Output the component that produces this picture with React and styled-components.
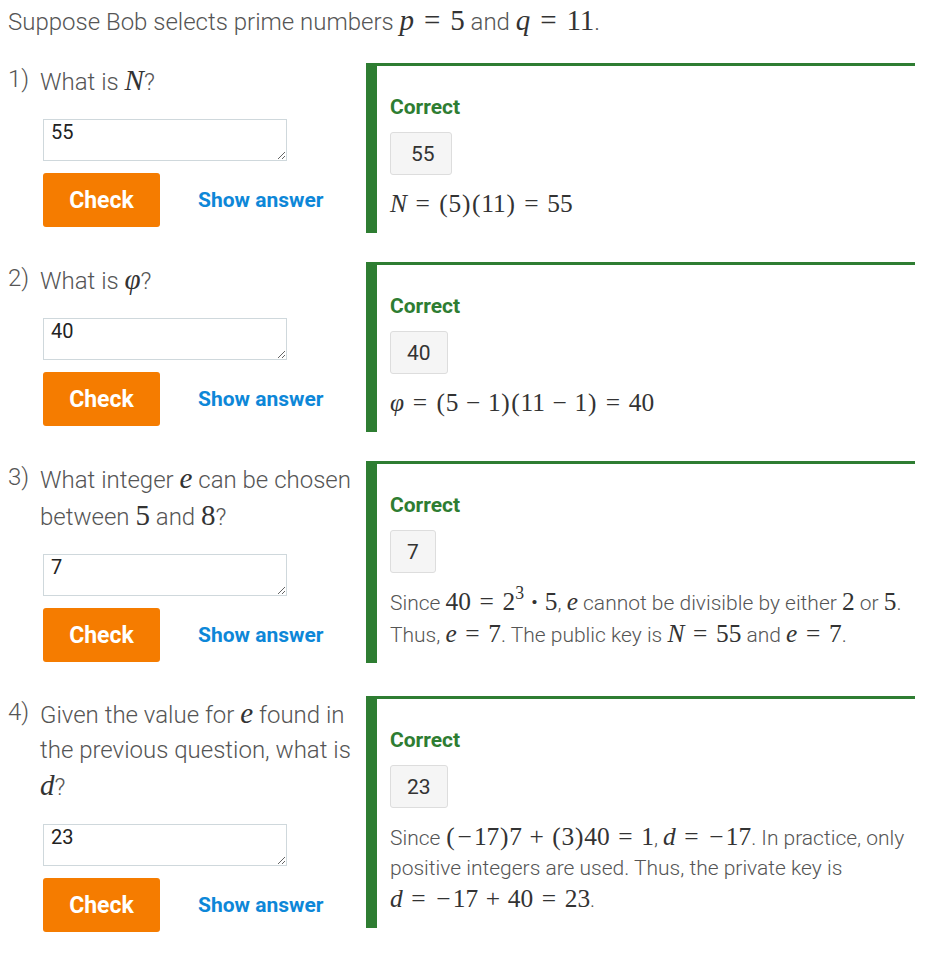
import styled, { createGlobalStyle } from "styled-components";

const GlobalStyle = createGlobalStyle`
    body {
        margin: 0;
        background: #ffffff;
        font-family: Roboto, "Noto Sans", sans-serif;
        color: #555555;
    }
`

function V({ children }) {
    return <Var>{children}</Var>
}

function Eq() {
    return <Rel>=</Rel>
}

function Op({ children }) {
    return <Bin>{children}</Bin>
}

export default function App() {
    return (
        <Page>
            <GlobalStyle />
            <Intro>
                Suppose Bob selects prime numbers <Math><V>p</V><Eq />5</Math> and <Math><V>q</V><Eq />11</Math>.
            </Intro>

            <Row>
                <Question>
                    <Prompt>
                        <Num>1)</Num>
                        <PromptText>What is <Math><V>N</V></Math>?</PromptText>
                    </Prompt>
                    <Answer defaultValue="55" />
                    <Actions>
                        <CheckButton>Check</CheckButton>
                        <ShowAnswer>Show answer</ShowAnswer>
                    </Actions>
                </Question>
                <Feedback>
                    <Correct>Correct</Correct>
                    <Given $left={20}>55</Given>
                    <Explain>
                        <Math><V>N</V><Eq /><P>(</P>5<P>)</P><P>(</P>11<P>)</P><Eq />55</Math>
                    </Explain>
                </Feedback>
            </Row>

            <Row>
                <Question>
                    <Prompt>
                        <Num>2)</Num>
                        <PromptText>What is <Math><V>φ</V></Math>?</PromptText>
                    </Prompt>
                    <Answer defaultValue="40" />
                    <Actions>
                        <CheckButton>Check</CheckButton>
                        <ShowAnswer>Show answer</ShowAnswer>
                    </Actions>
                </Question>
                <Feedback>
                    <Correct>Correct</Correct>
                    <Given>40</Given>
                    <Explain>
                        <Math><V>φ</V><Eq /><P>(</P>5<Op>−</Op>1<P>)</P><P>(</P>11<Op>−</Op>1<P>)</P><Eq />40</Math>
                    </Explain>
                </Feedback>
            </Row>

            <Row>
                <Question>
                    <Prompt>
                        <Num>3)</Num>
                        <PromptText>What integer <Math><V>e</V></Math> can be chosen between <Math>5</Math> and <Math>8</Math>?</PromptText>
                    </Prompt>
                    <Answer defaultValue="7" />
                    <Actions>
                        <CheckButton>Check</CheckButton>
                        <ShowAnswer>Show answer</ShowAnswer>
                    </Actions>
                </Question>
                <Feedback>
                    <Correct>Correct</Correct>
                    <Given>7</Given>
                    <Explain>
                        Since <Math>40<Eq />2<Sup>3</Sup><Dot>·</Dot>5</Math>, <Math><V>e</V></Math> cannot be divisible by either <Math>2</Math> or <Math>5</Math>.
                        Thus, <Math><V>e</V><Eq />7</Math>. The public key is <Math><V>N</V><Eq />55</Math> and <Math><V>e</V><Eq />7</Math>.
                    </Explain>
                </Feedback>
            </Row>

            <Row>
                <Question>
                    <Prompt>
                        <Num>4)</Num>
                        <PromptText>Given the value for <Math><V>e</V></Math> found in the previous question, what is <Math><V>d</V></Math>?</PromptText>
                    </Prompt>
                    <Answer defaultValue="23" />
                    <Actions>
                        <CheckButton>Check</CheckButton>
                        <ShowAnswer>Show answer</ShowAnswer>
                    </Actions>
                </Question>
                <Feedback>
                    <Correct>Correct</Correct>
                    <Given>23</Given>
                    <Explain>
                        Since <Math><P>(</P><Neg>−</Neg>17<P>)</P>7<Op>+</Op><P>(</P>3<P>)</P>40<Eq />1</Math>, <Math><V>d</V><Eq /><Neg>−</Neg>17</Math>. In practice, only positive integers are used. Thus, the private key is <Math><V>d</V><Eq /><Neg>−</Neg>17<Op>+</Op>40<Eq />23</Math>.
                    </Explain>
                </Feedback>
            </Row>
        </Page>
    )
}

const Page = styled.main`
    display: flex;
    flex-direction: column;
    padding: 3px 0 0 8px;
    width: 907px;
`

const Intro = styled.p`
    margin: 0 0 24px 0;
    font-size: 24px;
    font-weight: 300;
    line-height: 34px;
    color: #555555;
`

// KaTeX-like inline math, Times standing in for Computer Modern
const Math = styled.span`
    font-family: "Liberation Serif", "DejaVu Serif", serif;
    font-size: 1.21em;
    color: #333333;
    white-space: nowrap;
`

const Var = styled.i`
    font-style: italic;
`

const Rel = styled.span`
    margin: 0 0.34em;
`

const Bin = styled.span`
    margin: 0 0.3em;
`

const Dot = styled.span`
    margin: 0 0.24em;
    font-weight: 700;
`

const Neg = styled.span`
    margin: 0 0.08em;
`

const P = styled.span`
    margin: 0 0.03em;
`

const Sup = styled.sup`
    font-size: 0.7em;
    line-height: 0;
    vertical-align: 0.6em;
`

const Row = styled.section`
    display: flex;
    align-items: flex-start;
    gap: 8px;
    margin-bottom: 29px;
`

const Question = styled.div`
    display: flex;
    flex-direction: column;
    flex: 0 0 350px;
    padding-bottom: 5px;
`

const Prompt = styled.div`
    display: flex;
    align-items: flex-start;
`

const Num = styled.span`
    flex: 0 0 32px;
    font-size: 24px;
    font-weight: 300;
    line-height: 32px;
    color: #555555;
`

const PromptText = styled.span`
    font-size: 24px;
    font-weight: 300;
    line-height: 35px;
    color: #555555;
`

const Answer = styled.textarea`
    margin: 19px 0 0 35px;
    width: 244px;
    height: 42px;
    box-sizing: border-box;
    border: 1px solid #cfd8dc;
    border-radius: 0;
    padding: 0 7px;
    font-family: Roboto, sans-serif;
    font-size: 20px;
    line-height: 24px;
    color: #222222;
    outline: none;
`

const Actions = styled.div`
    display: flex;
    align-items: center;
    gap: 38px;
    margin: 12px 0 0 35px;
`

const CheckButton = styled.button`
    width: 117px;
    height: 54px;
    border: none;
    border-radius: 3px;
    background: #f57c00;
    color: #ffffff;
    font-family: Roboto, sans-serif;
    font-weight: 700;
    font-size: 23px;
`

const ShowAnswer = styled.button`
    padding: 0;
    border: none;
    background: none;
    color: #0d87d8;
    font-family: Roboto, sans-serif;
    font-weight: 700;
    font-size: 21px;
`

const Feedback = styled.div`
    flex: 0 0 549px;
    box-sizing: border-box;
    display: flex;
    flex-direction: column;
    align-items: flex-start;
    border-left: 11px solid #2e7d32;
    border-top: 3px solid #2e7d32;
    padding: 28px 0 13px 13px;
`

const Correct = styled.div`
    font-size: 21px;
    font-weight: 700;
    line-height: 26px;
    color: #2e7d32;
`

const Given = styled.div`
    margin-top: 12px;
    height: 43px;
    box-sizing: border-box;
    display: flex;
    align-items: center;
    padding: 0 16px 0 ${p => p.$left || 16}px;
    background: #f5f5f5;
    border: 1px solid #dddddd;
    border-radius: 3px;
    font-size: 21px;
    color: #333333;
`

const Explain = styled.div`
    margin-top: 13px;
    font-size: 21px;
    font-weight: 300;
    line-height: 30px;
    color: #555555;
`
